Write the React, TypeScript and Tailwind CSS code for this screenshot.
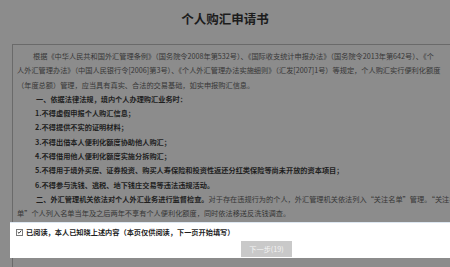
import React from "react";

const lineBase = "whitespace-nowrap leading-[14.3px] h-[14.3px]";

export default function App() {
  return (
    <div
      className="relative w-[450px] h-[267px] overflow-hidden bg-[#8c8c8c]"
      style={{ fontFamily: '"Noto Sans CJK SC", "Noto Sans", sans-serif' }}
    >
      <h1 className="pt-[11px] text-center text-[12.5px] leading-[16px] font-bold text-[#1c1c1c]">
        个人购汇申请书
      </h1>
      <div className="ml-[12px] mt-[17px] w-[700px] h-[300px] border-l border-t border-[#6a6a6a] pl-[4px] pt-[4px] text-[7.2px] text-[#363636]">
        <div className={`${lineBase} pl-[16px]`}>
          根据《中华人民共和国外汇管理条例》（国务院令2008年第532号）、《国际收支统计申报办法》（国务院令2013年第642号）、《个
        </div>
        <div className={lineBase}>
          人外汇管理办法》（中国人民银行令[2006]第3号）、《个人外汇管理办法实施细则》（汇发[2007]1号）等规定，个人购汇实行便利化额度
        </div>
        <div className={lineBase}>
          （年度总额）管理，应当具有真实、合法的交易基础，如实申报购汇信息。
        </div>
        <div className="font-bold text-[#1e1e1e]">
          <div className={`${lineBase} pl-[19px]`}>一、依据法律法规，境内个人办理购汇业务时：</div>
          <div className={`${lineBase} pl-[18px]`}>1.不得虚假申报个人购汇信息；</div>
          <div className={`${lineBase} pl-[18px]`}>2.不得提供不实的证明材料；</div>
          <div className={`${lineBase} pl-[18px]`}>3.不得出借本人便利化额度协助他人购汇；</div>
          <div className={`${lineBase} pl-[18px]`}>4.不得借用他人便利化额度实施分拆购汇；</div>
          <div className={`${lineBase} pl-[18px]`}>
            5.不得用于境外买房、证券投资、购买人寿保险和投资性返还分红类保险等尚未开放的资本项目；
          </div>
          <div className={`${lineBase} pl-[18px]`}>6.不得参与洗钱、逃税、地下钱庄交易等违法违规活动。</div>
        </div>
        <div className={`${lineBase} pl-[19px]`}>
          <span className="font-bold text-[#1e1e1e]">二、外汇管理机关依法对个人外汇业务进行监督检查。</span>
          对于存在违规行为的个人，外汇管理机关依法列入“关注名单”管理。“关注名
        </div>
        <div className={lineBase}>
          单”个人列入名单当年及之后两年不享有个人便利化额度，同时依法移送反洗钱调查。
        </div>
      </div>

      <div className="absolute left-[10px] right-0 top-[222px] h-[36px] bg-white border-t border-[#dde7f1] pl-[6px] pt-[4px]">
        <div className="flex items-center gap-[3px] h-[10px]">
          <span className="flex h-[7px] w-[7px] items-center justify-center border border-[#7a7a7a] bg-white">
            <svg viewBox="0 0 8 8" className="h-[6px] w-[6px]">
              <path d="M1.2 4.2 L3.2 6 L6.8 1.8" fill="none" stroke="#222" strokeWidth="1.4" />
            </svg>
          </span>
          <span className="whitespace-nowrap text-[7.2px] leading-[10px] font-bold text-[#1e1e1e]">
            已阅读，本人已知晓上述内容（本页仅供阅读，下一页开始填写）
          </span>
        </div>
        <div className="mt-[4px] ml-[225px] flex h-[16px] w-[51px] items-center justify-center bg-[#c9c9c9] text-[7.2px] text-[#f4f4f4]">
          下一步(19)
        </div>
      </div>
    </div>
  );
}
